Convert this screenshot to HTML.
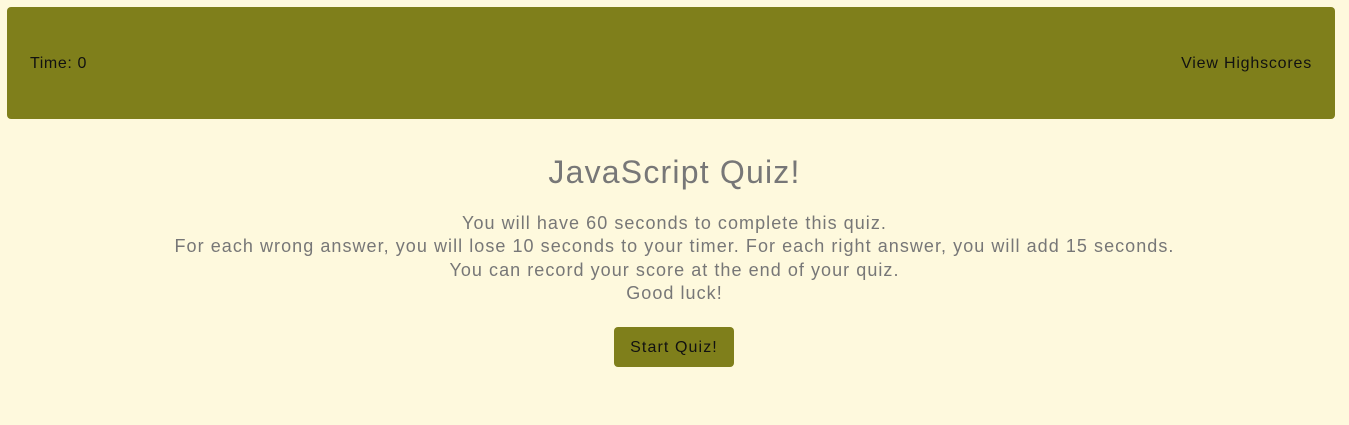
<!DOCTYPE html>
<html><head><style>
body{margin:0;background:#fef9dd;font-family:"Liberation Sans",sans-serif;width:1349px;height:425px;overflow:hidden}
.hdr{position:absolute;left:7px;top:7px;width:1328px;height:112px;background:#7f7f1b;border-radius:4px}
.hdr span{position:absolute;top:48px;font-size:16px;color:#111}
h1{position:absolute;top:154px;left:0;width:1349px;text-align:center;margin:0;font-weight:normal;font-size:32px;color:#777;letter-spacing:1.2px}
.p{position:absolute;top:212px;left:0;width:1349px;text-align:center;font-size:18px;line-height:23.3px;color:#777;letter-spacing:1.05px}
.btn{position:absolute;left:614px;top:327px;width:120px;height:40px;background:#7f7f1b;border-radius:4px;text-align:center;line-height:42px;font-size:16px;color:#111;letter-spacing:1.1px}
</style></head><body>
<div class="hdr"><span style="left:23px;letter-spacing:0.6px">Time: 0</span><span style="right:23px;letter-spacing:0.8px">View Highscores</span></div>
<h1>JavaScript Quiz!</h1>
<div class="p">You will have 60 seconds to complete this quiz.<br>For each wrong answer, you will lose 10 seconds to your timer. For each right answer, you will add 15 seconds.<br>You can record your score at the end of your quiz.<br>Good luck!</div>
<div class="btn">Start Quiz!</div>
</body></html>
